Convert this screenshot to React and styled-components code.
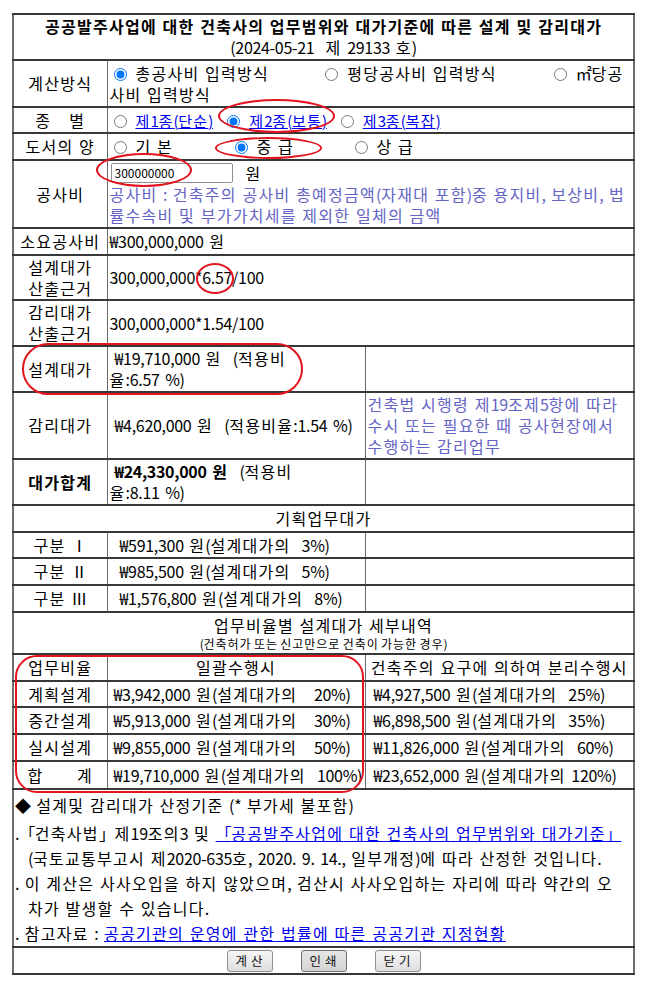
import React from 'react';
import styled, { createGlobalStyle } from 'styled-components';

const GlobalStyle = createGlobalStyle`
  html, body {
    margin: 0;
    padding: 0;
    background: #fff;
  }
  body {
    font-family: "Noto Sans CJK KR", "Noto Sans", sans-serif;
    color: #000;
  }
`;

const Page = styled.div`
  position: relative;
  width: 654px;
  padding: 13px 0 0 12px;
  box-sizing: border-box;
`;

const Sheet = styled.table`
  width: 621px;
  border-collapse: collapse;
  table-layout: fixed;
  border: 2px solid #6e6e6e;
  font-size: 16px;
  line-height: 21px;
  letter-spacing: -0.3px;
  word-spacing: 2.3px;
`;

const Col = styled.col`
  width: ${p => p.$w}px;
`;

const Row = styled.tr`
  height: ${p => p.$h}px;
`;

const Cell = styled.td`
  border-top: 2px solid #383838;
  border-bottom: 2px solid #383838;
  border-left: 1px solid #6a6a6a;
  border-right: 1px solid #6a6a6a;
  padding: 0 2px 0 ${p => (p.$indent ?? 2)}px;
  text-align: ${p => p.$align || 'left'};
  vertical-align: middle;
  font-weight: ${p => (p.$bold ? 700 : 400)};
  white-space: pre;
`;

const Label = styled(Cell)`
  text-align: center;
`;

const Banner = styled(Cell).attrs({ colSpan: 3 })`
  text-align: center;
`;

// Malgun Gothic sets Hangul on a full em; Noto CJK KR is a little narrower.
const Hangul = styled.span`
  letter-spacing: 0.08em;
`;

const HANGUL = /([\uAC00-\uD7A3\u3131-\u318E]+)/;
const ko = text =>
  text.split(HANGUL).map((part, i) => (i % 2 ? <Hangul key={i}>{part}</Hangul> : part));

const T = ({ children }) => <>{ko(children)}</>;

const Caption = styled.div`
  font-size: 12px;
  line-height: 16px;
  word-spacing: 0;
`;

const Option = styled.label`
  display: ${p => (p.$w ? 'inline-block' : 'inline')};
  width: ${p => (p.$w ? `${p.$w}px` : 'auto')};
  margin-left: ${p => p.$gap || 0}px;
`;

const Radio = styled.input.attrs({ type: 'radio' })`
  width: 13px;
  height: 13px;
  margin: 0 9px 0 4px;
  vertical-align: -1px;
`;

const Link = styled.a`
  color: #0000ee;
  text-decoration: underline;
  font-size: ${p => p.$size || 16}px;
  cursor: pointer;
`;

const Gap = styled.span`
  display: inline-block;
  width: ${p => p.$w}px;
`;

const AmountInput = styled.input`
  box-sizing: border-box;
  width: 122px;
  height: 20px;
  margin: 0 13px 0 1px;
  padding: 0 3px;
  border: 1px solid #8f8f8f;
  border-radius: 2px;
  font: 12px "Noto Sans CJK KR", sans-serif;
  color: #000;
  vertical-align: top;
`;

const Hint = styled.span`
  color: #6464c4;
`;

const Notes = styled(Cell).attrs({ colSpan: 3 })`
  padding: 3px 0 0 1px;
  line-height: 25px;
  vertical-align: top;
`;

const NoteLine = styled.div`
  padding-left: ${p => p.$indent || 0}px;
  margin-bottom: ${p => p.$after || 0}px;
`;

const ButtonBar = styled(Cell).attrs({ colSpan: 3 })`
  text-align: center;
  padding: 0;
  line-height: 0;
`;

const Button = styled.button`
  box-sizing: border-box;
  width: 46px;
  height: 22px;
  margin: 0 14px;
  padding: 0;
  font: 12.5px "Noto Sans CJK KR", sans-serif;
  color: #111;
  border: 1px solid ${p => (p.$active ? '#6f6f6f' : '#8e8e8e')};
  border-radius: 3px;
  background: ${p =>
    p.$active ? 'linear-gradient(#e6e6e6, #d4d4d4)' : 'linear-gradient(#f6f6f6, #dedede)'};
  vertical-align: middle;
`;

const Mark = styled.div`
  position: absolute;
  left: ${p => p.$x}px;
  top: ${p => p.$y}px;
  width: ${p => p.$w}px;
  height: ${p => p.$h}px;
  box-sizing: border-box;
  border: 2.5px solid #e2141d;
  border-radius: ${p => (p.$r ? `${p.$r}px` : '50%')};
  pointer-events: none;
`;

const marks = [
  { x: 218, y: 99, w: 117, h: 34 },
  { x: 215, y: 137, w: 107, h: 22 },
  { x: 96, y: 153, w: 96, h: 34 },
  { x: 196, y: 263, w: 38, h: 31 },
  { x: 22, y: 343, w: 281, h: 52, r: 26 },
  { x: 15, y: 655, w: 349, h: 138, r: 22 },
];

const planning = [
  ['구분 Ⅰ', '₩591,300 원(설계대가의  3%)', 26],
  ['구분 Ⅱ', '₩985,500 원(설계대가의  5%)', 27],
  ['구분 Ⅲ', '₩1,576,800 원(설계대가의  8%)', 27],
];

const phases = [
  ['계획설계', '₩3,942,000 원(설계대가의   20%)', '₩4,927,500 원(설계대가의  25%)', 26],
  ['중간설계', '₩5,913,000 원(설계대가의   30%)', '₩6,898,500 원(설계대가의  35%)', 27],
  ['실시설계', '₩9,855,000 원(설계대가의   50%)', '₩11,826,000 원(설계대가의  60%)', 27],
  ['합      계', '₩19,710,000 원(설계대가의  100%)', '₩23,652,000 원(설계대가의 120%)', 28],
];

const kinds = [
  ['제1종(단순)', false, 0],
  ['제2종(보통)', true, 10],
  ['제3종(복잡)', false, 10],
];

export default function App() {
  return (
    <>
      <GlobalStyle />
      <Page>
        <Sheet>
          <colgroup>
            <Col $w={94} />
            <Col $w={258} />
            <Col $w={269} />
          </colgroup>
          <tbody>
            <Row $h={46}>
              <Banner>
                <b>
                  <T>공공발주사업에 대한 건축사의 업무범위와 대가기준에 따른 설계 및 감리대가</T>
                </b>
                <br />
                <T>{'(2024-05-21  제 29133 호)'}</T>
              </Banner>
            </Row>
            <Row $h={47}>
              <Label>
                <T>계산방식</T>
              </Label>
              <Cell colSpan={2}>
                <Option>
                  <Radio name="calc" defaultChecked />
                  <T>총공사비 입력방식</T>
                </Option>
                <Option $gap={52}>
                  <Radio name="calc" />
                  <T>평당공사비 입력방식</T>
                </Option>
                <Option $gap={53}>
                  <Radio name="calc" />
                  <T>㎡당공</T>
                  <br />
                  <T>사비 입력방식</T>
                </Option>
              </Cell>
            </Row>
            <Row $h={26}>
              <Label>
                <T>종</T>
                <Gap $w={18} />
                <T>별</T>
              </Label>
              <Cell colSpan={2}>
                {kinds.map(([text, on, gap]) => (
                  <Option key={text} $gap={gap}>
                    <Radio name="kind" defaultChecked={on} />
                    <Link $size={15}>
                      <T>{text}</T>
                    </Link>
                  </Option>
                ))}
              </Cell>
            </Row>
            <Row $h={27}>
              <Label>
                <T>도서의 양</T>
              </Label>
              <Cell colSpan={2}>
                <Option $w={121}>
                  <Radio name="draw" />
                  <T>기 본</T>
                </Option>
                <Option $w={120}>
                  <Radio name="draw" defaultChecked />
                  <T>중 급</T>
                </Option>
                <Option $w={120}>
                  <Radio name="draw" />
                  <T>상 급</T>
                </Option>
              </Cell>
            </Row>
            <Row $h={68}>
              <Label>
                <T>공사비</T>
              </Label>
              <Cell colSpan={2}>
                <AmountInput defaultValue="300000000" />
                <T>원</T>
                <br />
                <Hint>
                  <T>공사비 : 건축주의 공사비 총예정금액(자재대 포함)중 용지비, 보상비, 법</T>
                  <br />
                  <T>률수속비 및 부가가치세를 제외한 일체의 금액</T>
                </Hint>
              </Cell>
            </Row>
            <Row $h={27}>
              <Label>
                <T>소요공사비</T>
              </Label>
              <Cell colSpan={2}>
                <T>₩300,000,000 원</T>
              </Cell>
            </Row>
            <Row $h={45}>
              <Label>
                <T>설계대가</T>
                <br />
                <T>산출근거</T>
              </Label>
              <Cell colSpan={2}>300,000,000*6.57/100</Cell>
            </Row>
            <Row $h={46}>
              <Label>
                <T>감리대가</T>
                <br />
                <T>산출근거</T>
              </Label>
              <Cell colSpan={2}>300,000,000*1.54/100</Cell>
            </Row>
            <Row $h={46}>
              <Label>
                <T>설계대가</T>
              </Label>
              <Cell>
                <Gap $w={5} />
                <T>{'₩19,710,000 원  (적용비'}</T>
                <br />
                <T>{'율:6.57 %)'}</T>
              </Cell>
              <Cell />
            </Row>
            <Row $h={67}>
              <Label>
                <T>감리대가</T>
              </Label>
              <Cell>
                <Gap $w={5} />
                <T>{'₩4,620,000 원  (적용비율:1.54 %)'}</T>
              </Cell>
              <Cell>
                <Hint>
                  <T>건축법 시행령 제19조제5항에 따라</T>
                  <br />
                  <T>수시 또는 필요한 때 공사현장에서</T>
                  <br />
                  <T>수행하는 감리업무</T>
                </Hint>
              </Cell>
            </Row>
            <Row $h={46}>
              <Label $bold>
                <T>대가합계</T>
              </Label>
              <Cell>
                <Gap $w={5} />
                <b>
                  <T>₩24,330,000 원</T>
                </b>
                <T>{'  (적용비'}</T>
                <br />
                <T>{'율:8.11 %)'}</T>
              </Cell>
              <Cell />
            </Row>
            <Row $h={27}>
              <Banner>
                <T>기획업무대가</T>
              </Banner>
            </Row>
            {planning.map(([name, value, h]) => (
              <Row key={name} $h={h}>
                <Label>
                  <T>{name}</T>
                </Label>
                <Cell $indent={12}>
                  <T>{value}</T>
                </Cell>
                <Cell />
              </Row>
            ))}
            <Row $h={42}>
              <Banner>
                <T>업무비율별 설계대가 세부내역</T>
                <Caption>
                  <T>(건축허가 또는 신고만으로 건축이 가능한 경우)</T>
                </Caption>
              </Banner>
            </Row>
            <Row $h={27}>
              <Label>
                <T>업무비율</T>
              </Label>
              <Label>
                <T>일괄수행시</T>
              </Label>
              <Label>
                <T>건축주의 요구에 의하여 분리수행시</T>
              </Label>
            </Row>
            {phases.map(([name, whole, split, h]) => (
              <Row key={name} $h={h}>
                <Label>
                  <T>{name}</T>
                </Label>
                <Cell $indent={6}>
                  <T>{whole}</T>
                </Cell>
                <Cell $indent={8}>
                  <T>{split}</T>
                </Cell>
              </Row>
            ))}
            <Row $h={155}>
              <Notes>
                <NoteLine $after={3}>
                  <T>◆ 설계및 감리대가 산정기준 (* 부가세 불포함)</T>
                </NoteLine>
                <NoteLine>
                  <T>.「건축사법」제19조의3 및 </T>
                  <Link>
                    <T>「공공발주사업에 대한 건축사의 업무범위와 대가기준」</T>
                  </Link>
                </NoteLine>
                <NoteLine $indent={13}>
                  <T>(국토교통부고시 제2020-635호, 2020. 9. 14., 일부개정)에 따라 산정한 것입니다.</T>
                </NoteLine>
                <NoteLine>
                  <T>. 이 계산은 사사오입을 하지 않았으며, 검산시 사사오입하는 자리에 따라 약간의 오</T>
                </NoteLine>
                <NoteLine $indent={13}>
                  <T>차가 발생할 수 있습니다.</T>
                </NoteLine>
                <NoteLine>
                  <T>. 참고자료 : </T>
                  <Link>
                    <T>공공기관의 운영에 관한 법률에 따른 공공기관 지정현황</T>
                  </Link>
                </NoteLine>
              </Notes>
            </Row>
            <Row $h={27}>
              <ButtonBar>
                <Button>
                  <T>계 산</T>
                </Button>
                <Button $active>
                  <T>인 쇄</T>
                </Button>
                <Button>
                  <T>닫 기</T>
                </Button>
              </ButtonBar>
            </Row>
          </tbody>
        </Sheet>
        {marks.map((m, i) => (
          <Mark key={i} $x={m.x} $y={m.y} $w={m.w} $h={m.h} $r={m.r} />
        ))}
      </Page>
    </>
  );
}
